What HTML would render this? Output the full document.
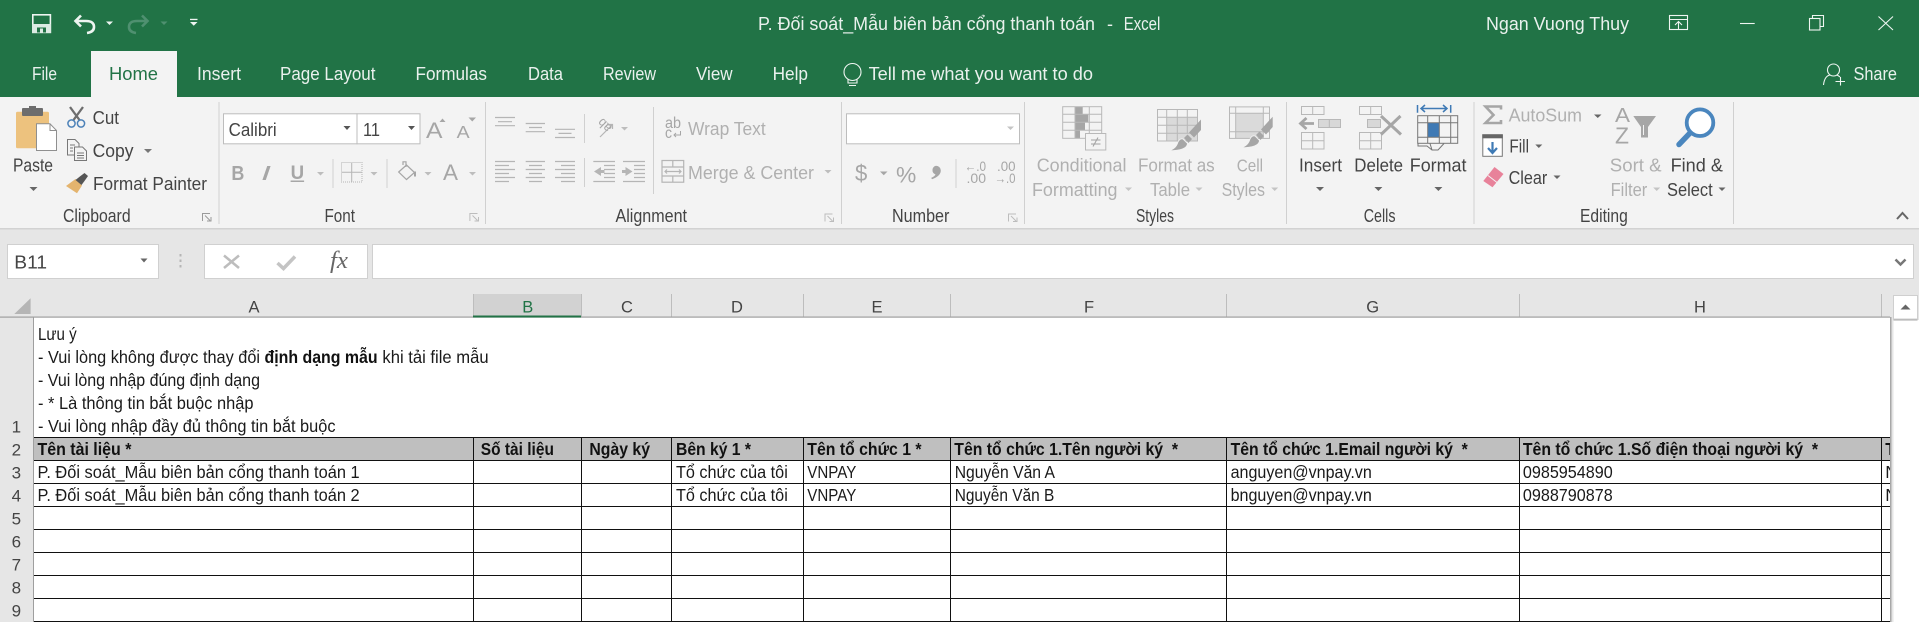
<!DOCTYPE html>
<html lang="vi">
<head>
<meta charset="utf-8">
<title>P. Đối soát_Mẫu biên bản cổng thanh toán - Excel</title>
<style>
html,body{margin:0;padding:0;width:1919px;height:622px;overflow:hidden;background:#e6e6e6}
svg{display:block}
text{font-family:"Liberation Sans","Noto Sans CJK SC",sans-serif;white-space:pre}
.w{fill:#e9f1ed;font-size:18.500px}
.l{fill:#444;font-size:18px}
.g{fill:#b0b0b0;font-size:18px}
.c{fill:#1a1a1a;font-size:17.500px}
.b{fill:#111;font-size:17.500px;font-weight:bold}
.h{fill:#444;font-size:16.500px;text-anchor:middle}
.h2{fill:#217346;font-size:16.500px;text-anchor:middle}
.r{fill:#444;font-size:17px;text-anchor:middle}
</style>
</head>
<body>
<svg width="1919" height="622" viewBox="0 0 1919 622" xmlns="http://www.w3.org/2000/svg">
<rect width="1919" height="622" fill="#e6e6e6"/>
<!-- title bar -->
<rect width="1919" height="97" fill="#217346"/>
<rect x="91" y="51" width="86" height="46" fill="#f3f3f3"/>
<!-- QAT -->
<rect x="32.800" y="14.800" width="17.600" height="17.600" fill="none" stroke="#eef5f1" stroke-width="1.600"/>
<rect x="32" y="24" width="19" height="9" fill="#dcebe3"/>
<rect x="37" y="27.500" width="9" height="5" fill="#217346"/><rect x="40" y="28.500" width="3" height="4" fill="#dcebe3"/>
<path d="M81 15.500L75.500 21L81 26.500M76 21H86Q94 21 94 27Q94 32 87 33" fill="none" stroke="#eef5f1" stroke-width="2.600"/>
<path d="M106 21.500h7l-3.500 3.500z" fill="#eef5f1"/>
<path d="M142 15.500L147.500 21L142 26.500M147 21H137Q129 21 129 27Q129 32 136 33" fill="none" stroke="#4f9070" stroke-width="2.600"/>
<path d="M160.500 21.500h7l-3.500 3.500z" fill="#4f9070"/>
<rect x="190" y="18.800" width="7.500" height="1.300" fill="#eef5f1"/><path d="M190 22h7.500l-3.750 3.800z" fill="#eef5f1"/>
<!-- title -->
<text class="w" x="758" y="30" textLength="337" lengthAdjust="spacingAndGlyphs">P. Đối soát_Mẫu biên bản cổng thanh toán</text>
<text class="w" x="1107" y="30" textLength="6" lengthAdjust="spacingAndGlyphs">-</text>
<text class="w" transform="translate(1123.700 30) scale(.81 1)">Excel</text>
<text class="w" x="1486" y="30" textLength="143" lengthAdjust="spacingAndGlyphs">Ngan Vuong Thuy</text>
<!-- window controls -->
<g fill="none" stroke="#eef5f1" stroke-width="1.100">
<rect x="1669.500" y="15.500" width="18" height="14"/><path d="M1669.500 19.500h18M1678.500 29V21.500M1675 25l3.500-3.500l3.500 3.500"/>
<path d="M1740 23.500h14.700"/>
<rect x="1809.500" y="18.500" width="10.500" height="11.500"/><path d="M1812.500 18V15.500H1823.500V26.500H1820.500"/>
<path d="M1878.500 16.500L1893 30M1893 16.500L1878.500 30"/>
<circle cx="1833.500" cy="70" r="6"/><path d="M1823.500 85Q1824.500 76 1830 75M1837 75Q1839 76 1840 77M1840.500 77V85.500M1835.500 81.500H1845"/>
<circle cx="852.500" cy="72" r="8.500"/>
<path d="M848 79.500V83H857V79.500M849 85.500H856"/>
</g>
<!-- tabs -->
<text class="w" x="32" y="80" textLength="25" lengthAdjust="spacingAndGlyphs">File</text>
<text x="109" y="80" font-size="18.500" fill="#217346" textLength="49" lengthAdjust="spacingAndGlyphs">Home</text>
<text class="w" x="197" y="80" textLength="44" lengthAdjust="spacingAndGlyphs">Insert</text>
<text class="w" x="280" y="80" textLength="95.500" lengthAdjust="spacingAndGlyphs">Page Layout</text>
<text class="w" x="415.500" y="80" textLength="71.500" lengthAdjust="spacingAndGlyphs">Formulas</text>
<text class="w" x="528" y="80" textLength="35" lengthAdjust="spacingAndGlyphs">Data</text>
<text class="w" x="603" y="80" textLength="53" lengthAdjust="spacingAndGlyphs">Review</text>
<text class="w" x="696" y="80" textLength="36.600" lengthAdjust="spacingAndGlyphs">View</text>
<text class="w" x="772.600" y="80" textLength="35.400" lengthAdjust="spacingAndGlyphs">Help</text>
<text class="w" x="868.600" y="80" textLength="224.400" lengthAdjust="spacingAndGlyphs">Tell me what you want to do</text>
<text class="w" x="1853.500" y="80" textLength="43.500" lengthAdjust="spacingAndGlyphs">Share</text>
<!-- ribbon -->
<rect y="97" width="1919" height="131" fill="#f3f3f3"/>
<rect y="228" width="1919" height="1.500" fill="#d2d2d2"/>
<g fill="#d0d0d0">
<rect x="218.500" y="102" width="1" height="122"/><rect x="485" y="102" width="1" height="122"/><rect x="841" y="102" width="1" height="122"/><rect x="1024" y="102" width="1" height="122"/><rect x="1286" y="102" width="1" height="122"/><rect x="1473.500" y="102" width="1" height="122"/><rect x="1733" y="102" width="1" height="122"/>
<rect x="584" y="114" width="1" height="29"/><rect x="584" y="158" width="1" height="29"/><rect x="653" y="107" width="1" height="87"/><rect x="332.500" y="159" width="1" height="29"/><rect x="386.500" y="159" width="1" height="29"/><rect x="955.500" y="159" width="1" height="29"/>
</g>
<!-- clipboard -->
<rect x="16" y="111.700" width="33" height="36.600" rx="1.500" fill="#edc27e"/>
<rect x="22" y="108" width="21" height="8" rx="1" fill="#6d6d6d"/><rect x="29" y="106" width="7" height="4" fill="#6d6d6d"/>
<path d="M36.500 123.800H50L56.500 130.500V150.500H36.500Z" fill="#fff" stroke="#8f8f8f"/><path d="M50 123.800V130.500H56.500" fill="none" stroke="#8f8f8f"/>
<text class="l" x="13" y="171.700" textLength="40" lengthAdjust="spacingAndGlyphs">Paste</text>
<path d="M29.500 187h8l-4 4z" fill="#666"/>
<path d="M70 107L79.500 120M83 107L73.500 120" stroke="#6d6d6d" stroke-width="2.300" fill="none"/>
<circle cx="71.500" cy="123.500" r="3.600" fill="none" stroke="#4d82b8" stroke-width="1.500"/><circle cx="81" cy="123.500" r="3.600" fill="none" stroke="#4d82b8" stroke-width="1.500"/>
<text class="l" x="92.600" y="124" textLength="26.400" lengthAdjust="spacingAndGlyphs">Cut</text>
<g fill="#f3f3f3" stroke="#777" stroke-width="1"><path d="M67.500 139.500H75L79 143.500V155H67.500Z"/><path d="M74.500 147H82.500L86.500 151V160.500H74.500Z"/><path d="M70 145h5M70 148h3M70 151h3M77 153h7M77 155.500h7M77 158h7" fill="none"/></g>
<text class="l" x="92.600" y="157" textLength="40.900" lengthAdjust="spacingAndGlyphs">Copy</text>
<path d="M144 149h8l-4 4z" fill="#777"/>
<path d="M66 186L75.500 179L82 185.500L77 193.300Z" fill="#e4b46e"/><path d="M75.500 180L80.500 176L84.500 173L88 176L84.500 181L81.500 185Z" fill="#555"/>
<text class="l" x="93" y="190" textLength="114" lengthAdjust="spacingAndGlyphs">Format Painter</text>
<text class="l" x="63" y="222" textLength="67.600" lengthAdjust="spacingAndGlyphs">Clipboard</text>
<g fill="none" stroke="#9a9a9a" stroke-width="1"><path d="M202.500 221V213.500H210"/><path d="M205 215.500L210 220.500M207 221H211V217"/></g>
<!-- font -->
<rect x="223.500" y="113.800" width="133.500" height="30" fill="#fff" stroke="#bdbdbd"/>
<rect x="357" y="113.800" width="63" height="30" fill="#fff" stroke="#bdbdbd"/>
<text class="l" x="228.600" y="136" textLength="48.100" lengthAdjust="spacingAndGlyphs">Calibri</text>
<text class="l" x="363" y="136" textLength="17" lengthAdjust="spacingAndGlyphs">11</text>
<path d="M343.500 126h7l-3.500 4zM408 126h7l-3.500 4z" fill="#555"/>
<text x="426" y="138" font-size="22" fill="#a6a6a6" textLength="16.500" lengthAdjust="spacingAndGlyphs">A</text>
<path d="M439.500 122l3-3.500l3 3.500z" fill="#a6a6a6"/>
<text x="456.700" y="138" font-size="17.500" fill="#a6a6a6" textLength="13" lengthAdjust="spacingAndGlyphs">A</text>
<path d="M468.500 117.500h7.500l-3.750 4z" fill="#a6a6a6"/>
<text x="231.400" y="180" font-size="20.500" font-weight="bold" fill="#a6a6a6" textLength="13" lengthAdjust="spacingAndGlyphs">B</text>
<text x="261" y="180" font-size="20.500" font-style="italic" fill="#a6a6a6" textLength="10" lengthAdjust="spacingAndGlyphs">I</text>
<text x="290.600" y="179" font-size="19.500" font-weight="bold" fill="#a6a6a6" textLength="13.500" lengthAdjust="spacingAndGlyphs">U</text>
<rect x="290.600" y="180.500" width="13.500" height="1.500" fill="#a6a6a6"/>
<path d="M317 172h7l-3.500 3.500zM370.500 172h7l-3.500 3.500zM424.500 172h7l-3.500 3.500zM469 172h7l-3.500 3.500z" fill="#bdbdbd"/>
<g fill="none" stroke="#b5b5b5"><rect x="341.500" y="162.500" width="20.500" height="19.500" stroke-dasharray="1 1"/><path d="M351.700 163V182M342 172.200H362"/></g>
<g fill="none" stroke="#a6a6a6" stroke-width="1.200"><path d="M398.700 172L406.500 165L414.500 172.500L406.500 179.500Z"/><path d="M403 165V161.800H406V167"/><path d="M415 171.500V176.500" stroke-width="2"/></g>
<text x="443" y="180" font-size="22.500" fill="#a6a6a6" textLength="15" lengthAdjust="spacingAndGlyphs">A</text>
<text class="l" x="324.500" y="222" textLength="30.500" lengthAdjust="spacingAndGlyphs">Font</text>
<g fill="none" stroke="#bdbdbd" stroke-width="1"><path d="M469.900 221V213.500H477.500"/><path d="M472.500 215.500L477.500 220.500M474.500 221H478.500V217"/>
<path d="M825 221.500V214H832.500"/><path d="M827.500 216L832.500 221M829.500 221.500H833.500V217.500"/>
<path d="M1008.500 221.500V214H1016"/><path d="M1011 216L1016 221M1013 221.500H1017V217.500"/></g>
<!-- alignment -->
<g stroke="#b5b5b5" stroke-width="1.200" fill="none">
<path d="M495 117.500h20M498 121.700h14M495 125.700h20"/>
<path d="M525.700 123.500h19.300M529 127.500h13M525.700 131.700h19.300"/>
<path d="M555 129.300h20M558.500 133.400h13M555 137.500h20"/>
<path d="M495 161.500h20M495 165.500h14M495 169.500h20M495 173.500h14M495 177.500h20M495 181.500h14"/>
<path d="M525.700 161.500h19.300M529 165.500h13M525.700 169.500h19.300M529 173.500h13M525.700 177.500h19.300M529 181.500h13"/>
<path d="M555 161.500h20M561 165.500h14M555 169.500h20M561 173.500h14M555 177.500h20M561 181.500h14"/>
<path d="M593.300 161.500h21.700M593.300 181.500h21.700M604 165.500h11M604 169.500h11M604 173.500h11M604 177.500h11"/>
<path d="M623 161.500h22M623 181.500h22M634 165.500h11M634 169.500h11M634 173.500h11M634 177.500h11"/>
<path d="M600 137L612.500 124.500M608 124.500H612.500V129"/>
<rect x="662" y="160.500" width="21.700" height="21.700"/><path d="M662 167h21.700M662 176h21.700M672.800 160.500V167M672.800 176V182.200M665 171.500h16M667 169.500l-2 2l2 2M679 169.500l2 2l-2 2"/>
</g>
<path d="M594 171.500l7-4.500v9zM601 170h3.500v3H601z" fill="#b5b5b5"/>
<path d="M632.500 171.500l-7-4.500v9zM625.500 170H622v3h3.500z" fill="#b5b5b5"/>
<text transform="rotate(-135 604 126)" x="597" y="131" font-size="13" fill="#a6a6a6" textLength="14" lengthAdjust="spacingAndGlyphs">ab</text>
<path d="M621 127h7l-3.500 3.500z" fill="#bdbdbd"/>
<text x="665" y="128" font-size="15.500" fill="#a6a6a6" textLength="16" lengthAdjust="spacingAndGlyphs">ab</text>
<text x="665" y="138" font-size="15.500" fill="#a6a6a6" textLength="7" lengthAdjust="spacingAndGlyphs">c</text>
<path d="M680.500 131v4h-6M676 133l-2 2l2 2" fill="none" stroke="#a6a6a6"/>
<text class="g" x="688" y="135" textLength="77.700" lengthAdjust="spacingAndGlyphs">Wrap Text</text>
<text class="g" x="688" y="179" textLength="126" lengthAdjust="spacingAndGlyphs">Merge &amp; Center</text>
<path d="M824.500 170h7l-3.500 3.500z" fill="#bdbdbd"/>
<text class="l" x="615.500" y="222" textLength="71.500" lengthAdjust="spacingAndGlyphs">Alignment</text>
<!-- number -->
<rect x="846.500" y="113.800" width="173" height="30" fill="#fff" stroke="#bdbdbd"/>
<path d="M1007 126.500h7l-3.500 3.500z" fill="#c4c4c4"/>
<text x="855" y="181" font-size="23" fill="#a6a6a6" textLength="12.300" lengthAdjust="spacingAndGlyphs">$</text>
<path d="M880 171.500h7.500l-3.750 3.800z" fill="#a6a6a6"/>
<text x="896" y="182.500" font-size="22" fill="#a6a6a6" textLength="20.300" lengthAdjust="spacingAndGlyphs">%</text>
<path d="M936 165.700a4.800 4.800 0 0 1 4.800 4.800q0 5.500-8.800 8.700l-.8-1.300q3.800-1.800 4.300-3.400a4.600 4.600 0 0 1 .5-8.800z" fill="#a6a6a6"/>
<text x="964.500" y="171" font-size="13.500" fill="#a6a6a6" textLength="21.500" lengthAdjust="spacingAndGlyphs">←.0</text>
<text x="966.500" y="183" font-size="13.500" fill="#a6a6a6" textLength="19.500" lengthAdjust="spacingAndGlyphs">.00</text>
<text x="997" y="171" font-size="13.500" fill="#a6a6a6" textLength="18.500" lengthAdjust="spacingAndGlyphs">.00</text>
<text x="994.500" y="183" font-size="13.500" fill="#a6a6a6" textLength="21" lengthAdjust="spacingAndGlyphs">→.0</text>
<text class="l" x="892" y="222" textLength="57.400" lengthAdjust="spacingAndGlyphs">Number</text>
<!-- styles -->
<g fill="#a6a6a6"><rect x="1075" y="107" width="7.700" height="7.500"/><rect x="1075" y="114.500" width="13.300" height="8"/><rect x="1075" y="122.500" width="10" height="8"/><rect x="1075" y="130.500" width="5" height="8"/></g>
<g fill="none" stroke="#b8b8b8"><rect x="1062.700" y="106.700" width="39" height="31.600"/><path d="M1075 107V138M1089.300 107V138M1063 114.300H1101.500M1063 122.300H1101.500M1063 130.300H1101.500"/>
<rect x="1085.500" y="133.500" width="20.300" height="16.500" fill="#f3f3f3"/>
<path d="M1091 140h9.500M1091 144h9.500M1098 137.500L1093 146.500" stroke="#a0a0a0"/></g>
<rect x="1167" y="117.300" width="30.700" height="23.700" fill="#dadada"/>
<g fill="none" stroke="#b8b8b8"><rect x="1157.500" y="109.500" width="40" height="31.500"/><path d="M1166.700 110V141M1177.300 110V141M1187.300 110V133M1158 117.300H1197.500M1158 125.300H1197.500M1158 133.300H1197.500"/></g>
<rect x="1235.700" y="113.300" width="27.600" height="25" fill="#dadada"/>
<g fill="none" stroke="#b8b8b8"><rect x="1229.500" y="106.900" width="40" height="31.500"/><path d="M1235.700 107V138M1263.300 107V138M1230 113.300H1269M1230 131.700H1269"/></g>
<path d="M1201 119.500V130L1194 137.500L1189 132.500Z" fill="#a6a6a6"/>
<path d="M1187.500 134.500L1192 139L1188.500 143L1184 138Z" fill="#a6a6a6"/>
<path d="M1168.500 150.700Q1176 149 1178 142Q1180 138 1183 139L1187.500 143.500Q1187 150.700 1168.500 150.700Z" fill="#a6a6a6" stroke="#f3f3f3" stroke-width=".8"/>
<path d="M1272.700 116.700V127L1266 134.500L1261 129.500Z" fill="#a6a6a6"/>
<path d="M1259.500 131.500L1264 136L1260.500 140L1256 135Z" fill="#a6a6a6"/>
<path d="M1240.700 147.700Q1248 146 1250 139Q1252 135 1255 136L1259.500 140.500Q1259 147.700 1240.700 147.700Z" fill="#a6a6a6" stroke="#f3f3f3" stroke-width=".8"/>
<text class="g" x="1036.700" y="171.700" textLength="89.800" lengthAdjust="spacingAndGlyphs">Conditional</text>
<text class="g" x="1032" y="196" textLength="85.500" lengthAdjust="spacingAndGlyphs">Formatting</text>
<text class="g" x="1138" y="171.700" textLength="76.700" lengthAdjust="spacingAndGlyphs">Format as</text>
<text class="g" x="1150" y="196" textLength="40" lengthAdjust="spacingAndGlyphs">Table</text>
<text class="g" transform="translate(1236.700 171.700) scale(.85 1)">Cell</text>
<text class="g" x="1221.600" y="196" textLength="43.400" lengthAdjust="spacingAndGlyphs">Styles</text>
<path d="M1125 187.500h7l-3.500 3.500zM1195.500 187.500h7l-3.500 3.500zM1271.200 187.500h7l-3.500 3.500zM1653.200 187.500h7l-3.500 3.500z" fill="#c4c4c4"/>
<text class="l" x="1136" y="222" textLength="38" lengthAdjust="spacingAndGlyphs">Styles</text>
<!-- cells -->
<g fill="none" stroke="#b8b8b8">
<rect x="1301.500" y="106.500" width="22.500" height="8"/><path d="M1312.700 106.500V114.500"/>
<rect x="1318.500" y="119.500" width="22" height="8" fill="#d8d8d8"/><path d="M1329.300 119.500V127.500"/>
<rect x="1301.500" y="132.500" width="22.500" height="16.500"/><path d="M1312.700 132.500V149M1301.500 140.700H1324"/>
<rect x="1359.500" y="106.500" width="22" height="8"/><path d="M1370.700 106.500V114.500"/>
<rect x="1367.500" y="119.500" width="13" height="8" fill="#d8d8d8"/>
<rect x="1359.500" y="132.500" width="22" height="16.500"/><path d="M1370.700 132.500V149M1359.500 140.700H1381.500"/>
</g>
<path d="M1314 123.500H1301M1306.500 118L1300.500 123.500L1306.500 129" fill="none" stroke="#a6a6a6" stroke-width="2.800"/>
<path d="M1381 116L1401 134.500M1400.500 116L1381 134.500" fill="none" stroke="#a6a6a6" stroke-width="3"/>
<rect x="1427.700" y="122.700" width="11.600" height="14.600" fill="#3f7ab5"/>
<g fill="none" stroke="#777"><rect x="1417.700" y="115.700" width="40" height="27.600" fill="none"/><path d="M1427.700 116V143M1439.300 116V143M1450.700 116V143M1418 122.700H1457.500M1418 137.300H1457.500"/>
<path d="M1418 143.500V146H1427L1432 150H1438L1444 143.500M1430 143.500L1432 150"/></g>
<g fill="none" stroke="#3f7ab5" stroke-width="1.500"><path d="M1417.500 105V112.700M1450.700 105V112.700M1421 108.500H1447M1425 105L1421 108.500L1425 112M1443 105L1447 108.500L1443 112"/></g>
<text class="l" x="1299" y="171.700" textLength="43" lengthAdjust="spacingAndGlyphs">Insert</text>
<text class="l" x="1354.300" y="171.700" textLength="48.700" lengthAdjust="spacingAndGlyphs">Delete</text>
<text class="l" x="1409.800" y="171.700" textLength="56.700" lengthAdjust="spacingAndGlyphs">Format</text>
<path d="M1316 187h8l-4 4zM1374.400 187h8l-4 4zM1434.400 187h8l-4 4z" fill="#666"/>
<text class="l" x="1363.700" y="222" textLength="31.800" lengthAdjust="spacingAndGlyphs">Cells</text>
<!-- editing -->
<path d="M1501 109.500V106.500H1485.500L1493.500 115L1485.500 123H1501V120" fill="none" stroke="#a6a6a6" stroke-width="2.600"/>
<text class="g" x="1508.600" y="121.700" textLength="73.400" lengthAdjust="spacingAndGlyphs">AutoSum</text>
<path d="M1594 114.500h7.500l-3.750 3.500z" fill="#666"/>
<rect x="1482.800" y="134.800" width="19.500" height="21.500" fill="#fff" stroke="#777"/><rect x="1482.300" y="134.300" width="20.500" height="4" fill="#666"/>
<path d="M1492.500 142V152.500M1488 148L1492.500 153L1497 148" fill="none" stroke="#3f7ab5" stroke-width="2.200"/>
<text class="l" x="1509.400" y="152.700" textLength="19.600" lengthAdjust="spacingAndGlyphs">Fill</text>
<path d="M1535.300 144.500h7l-3.500 3.500z" fill="#666"/>
<path d="M1494.500 167L1503.500 174L1492.500 187.300L1483.300 181Z" fill="#e8829a"/><path d="M1488 175.500L1497 182.500" stroke="#f3f3f3" stroke-width="1"/>
<text class="l" x="1508.600" y="184" textLength="38.700" lengthAdjust="spacingAndGlyphs">Clear</text>
<path d="M1553.500 175.500h7l-3.500 3.500z" fill="#666"/>
<text x="1615" y="122" font-size="20.500" fill="#a6a6a6" textLength="15" lengthAdjust="spacingAndGlyphs">A</text>
<text x="1615" y="143.500" font-size="23" fill="#a6a6a6" textLength="14" lengthAdjust="spacingAndGlyphs">Z</text>
<path d="M1633.300 116H1656L1648 127V137.500H1641V127Z" fill="#a6a6a6"/><path d="M1643.500 125V135" stroke="#f3f3f3"/>
<circle cx="1700" cy="122.700" r="13.300" fill="#fff" stroke="#4a86be" stroke-width="3.800"/>
<path d="M1690 133L1679 144.500" stroke="#4a86be" stroke-width="5.500" stroke-linecap="round"/>
<text class="g" x="1609.800" y="171.700" textLength="51.800" lengthAdjust="spacingAndGlyphs">Sort &amp;</text>
<text class="g" x="1610.600" y="196" textLength="36.700" lengthAdjust="spacingAndGlyphs">Filter</text>
<text class="l" x="1670.600" y="171.700" textLength="52.300" lengthAdjust="spacingAndGlyphs">Find &amp;</text>
<text class="l" x="1667" y="196" textLength="45.700" lengthAdjust="spacingAndGlyphs">Select</text>
<path d="M1718.500 187.500h7l-3.500 3.500z" fill="#666"/>
<text class="l" x="1580" y="222" textLength="47.800" lengthAdjust="spacingAndGlyphs">Editing</text>
<path d="M1897 219L1902.500 213L1908 219" fill="none" stroke="#666" stroke-width="2"/>
<!-- formula bar -->
<rect x="7.500" y="244.500" width="151" height="34" fill="#fff" stroke="#d0d0d0"/>
<text x="14.300" y="268.300" font-size="18.500" fill="#444" textLength="32.700" lengthAdjust="spacingAndGlyphs">B11</text>
<path d="M140.500 258.500h7l-3.500 4z" fill="#666"/>
<g fill="#b5b5b5"><rect x="179.500" y="254" width="2" height="2.500"/><rect x="179.500" y="259.500" width="2" height="2.500"/><rect x="179.500" y="265" width="2" height="2.500"/></g>
<rect x="204.500" y="244.500" width="163" height="34" fill="#fff" stroke="#d0d0d0"/>
<path d="M224 255.500L239 268M239 255.500L224 268" fill="none" stroke="#bdbdbd" stroke-width="2.500"/>
<path d="M277.500 263L283.500 268.500L295 256.500" fill="none" stroke="#c4c4c4" stroke-width="3.500"/>
<text x="330" y="268" font-size="24" font-style="italic" fill="#666" textLength="18" lengthAdjust="spacingAndGlyphs" style="font-family:'Liberation Serif',serif">fx</text>
<rect x="372.500" y="244.500" width="1541" height="34" fill="#fff" stroke="#d0d0d0"/>
<path d="M1895.500 259.500L1900.500 264.500L1905.500 259.500" fill="none" stroke="#777" stroke-width="2.500"/>
<!-- sheet -->
<rect x="34" y="317" width="1857" height="305" fill="#fff"/>
<rect x="473" y="294" width="108" height="23" fill="#d2d2d2"/>
<g fill="#bdbdbd"><rect x="581" y="294" width="1" height="23"/><rect x="671" y="294" width="1" height="23"/><rect x="803" y="294" width="1" height="23"/><rect x="950" y="294" width="1" height="23"/><rect x="1226" y="294" width="1" height="23"/><rect x="1519" y="294" width="1" height="23"/><rect x="1881" y="294" width="1" height="23"/><rect x="473" y="294" width="1" height="23"/></g>
<rect x="0" y="316.500" width="1890" height="1.200" fill="#9f9f9f"/>
<rect x="473" y="315.500" width="108" height="2" fill="#217346"/>
<rect x="33" y="317" width="1" height="305" fill="#9f9f9f"/>
<path d="M30.600 298.300V314H14.300Z" fill="#b5b5b5"/>
<text class="h" x="254" y="312.300">A</text>
<text class="h2" x="527.800" y="312.300">B</text>
<text class="h" x="627" y="312.300">C</text>
<text class="h" x="737" y="312.300">D</text>
<text class="h" x="877" y="312.300">E</text>
<text class="h" x="1089" y="312.300">F</text>
<text class="h" x="1372.700" y="312.300">G</text>
<text class="h" x="1700" y="312.300">H</text>
<text class="r" x="16.300" y="432.300">1</text>
<text class="r" x="16.300" y="455.300">2</text>
<text class="r" x="16.300" y="478.300">3</text>
<text class="r" x="16.300" y="501.300">4</text>
<text class="r" x="16.300" y="524.300">5</text>
<text class="r" x="16.300" y="547.300">6</text>
<text class="r" x="16.300" y="570.300">7</text>
<text class="r" x="16.300" y="593.300">8</text>
<text class="r" x="16.300" y="616.300">9</text>
<rect x="34" y="437" width="1857" height="23" fill="#bfbfbf"/>
<!-- grid -->
<g fill="#111">
<rect x="34" y="437" width="1857" height="1"/><rect x="34" y="460" width="1857" height="1"/><rect x="34" y="483" width="1857" height="1"/><rect x="34" y="506" width="1857" height="1"/><rect x="34" y="529" width="1857" height="1"/><rect x="34" y="552" width="1857" height="1"/><rect x="34" y="575" width="1857" height="1"/><rect x="34" y="598" width="1857" height="1"/><rect x="34" y="621" width="1857" height="1"/>
<rect x="473" y="437" width="1" height="185"/><rect x="581" y="437" width="1" height="185"/><rect x="671" y="437" width="1" height="185"/><rect x="803" y="437" width="1" height="185"/><rect x="950" y="437" width="1" height="185"/><rect x="1226" y="437" width="1" height="185"/><rect x="1519" y="437" width="1" height="185"/><rect x="1881" y="437" width="1" height="185"/>
</g>
<!-- notes -->
<text class="c" x="38" y="340" textLength="38.700" lengthAdjust="spacingAndGlyphs">Lưu ý</text>
<text class="c" x="38" y="363" textLength="222" lengthAdjust="spacingAndGlyphs">- Vui lòng không được thay đổi</text>
<text class="b" x="264.500" y="363" textLength="113.100" lengthAdjust="spacingAndGlyphs">định dạng mẫu</text>
<text class="c" x="382.400" y="363" textLength="106.200" lengthAdjust="spacingAndGlyphs">khi tải file mẫu</text>
<text class="c" x="38" y="386" textLength="222" lengthAdjust="spacingAndGlyphs">- Vui lòng nhập đúng định dạng</text>
<text class="c" x="38" y="409" textLength="215.500" lengthAdjust="spacingAndGlyphs">- * Là thông tin bắt buộc nhập</text>
<text class="c" x="38" y="432" textLength="297.500" lengthAdjust="spacingAndGlyphs">- Vui lòng nhập đầy đủ thông tin bắt buộc</text>
<!-- header row -->
<text class="b" x="37.500" y="455" textLength="93.900" lengthAdjust="spacingAndGlyphs">Tên tài liệu *</text>
<text class="b" x="480.800" y="455" textLength="73.100" lengthAdjust="spacingAndGlyphs">Số tài liệu</text>
<text class="b" x="589.400" y="455" textLength="60.600" lengthAdjust="spacingAndGlyphs">Ngày ký</text>
<text class="b" x="676" y="455" textLength="75" lengthAdjust="spacingAndGlyphs">Bên ký 1 *</text>
<text class="b" x="807.300" y="455" textLength="114.300" lengthAdjust="spacingAndGlyphs">Tên tổ chức 1 *</text>
<text class="b" x="954.300" y="455" textLength="223.700" lengthAdjust="spacingAndGlyphs">Tên tổ chức 1.Tên người ký  *</text>
<text class="b" x="1230.600" y="455" textLength="237.200" lengthAdjust="spacingAndGlyphs">Tên tổ chức 1.Email người ký  *</text>
<text class="b" x="1522.900" y="455" textLength="295.100" lengthAdjust="spacingAndGlyphs">Tên tổ chức 1.Số điện thoại người ký  *</text>
<text class="b" x="1885.300" y="455">T</text>
<!-- data -->
<text class="c" x="37.500" y="478" textLength="322.100" lengthAdjust="spacingAndGlyphs">P. Đối soát_Mẫu biên bản cổng thanh toán 1</text>
<text class="c" x="676" y="478" textLength="111.800" lengthAdjust="spacingAndGlyphs">Tổ chức của tôi</text>
<text class="c" x="807.300" y="478" textLength="49" lengthAdjust="spacingAndGlyphs">VNPAY</text>
<text class="c" x="954.700" y="478" textLength="100.300" lengthAdjust="spacingAndGlyphs">Nguyễn Văn A</text>
<text class="c" x="1230.600" y="478" textLength="141.200" lengthAdjust="spacingAndGlyphs">anguyen@vnpay.vn</text>
<text class="c" x="1522.900" y="478" textLength="89.800" lengthAdjust="spacingAndGlyphs">0985954890</text>
<text class="c" x="1885.300" y="478">N</text>
<text class="c" x="37.500" y="501" textLength="322.100" lengthAdjust="spacingAndGlyphs">P. Đối soát_Mẫu biên bản cổng thanh toán 2</text>
<text class="c" x="676" y="501" textLength="111.800" lengthAdjust="spacingAndGlyphs">Tổ chức của tôi</text>
<text class="c" x="807.300" y="501" textLength="49" lengthAdjust="spacingAndGlyphs">VNPAY</text>
<text class="c" x="954.700" y="501" textLength="99.600" lengthAdjust="spacingAndGlyphs">Nguyễn Văn B</text>
<text class="c" x="1230.600" y="501" textLength="141.200" lengthAdjust="spacingAndGlyphs">bnguyen@vnpay.vn</text>
<text class="c" x="1522.900" y="501" textLength="89.800" lengthAdjust="spacingAndGlyphs">0988790878</text>
<text class="c" x="1885.300" y="501">N</text>
<!-- right edge + scrollbar -->
<rect x="1890" y="294" width="29" height="328" fill="#e6e6e6"/>
<rect x="1890" y="317" width="1.500" height="305" fill="#a8a8a8"/>
<rect x="1893.500" y="320" width="25.500" height="302" fill="#fff"/>
<rect x="1893.500" y="319.500" width="24" height="1" fill="#a8a8a8"/>
<rect x="1893.500" y="295.500" width="24" height="23.500" fill="#fff" stroke="#cfcfcf"/>
<path d="M1900.500 309.500h10l-5-5z" fill="#666"/>
</svg>
</body>
</html>
